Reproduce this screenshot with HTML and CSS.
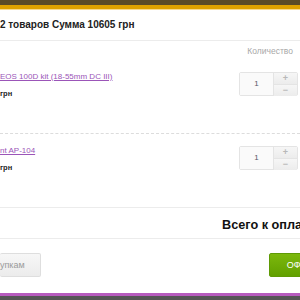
FILE: index.html
```html
<!DOCTYPE html>
<html lang="ru">
<head>
    <meta charset="UTF-8">
    <meta name="viewport" content="width=device-width, initial-scale=1.0">
    <title>Корзина</title>
    <link rel="stylesheet" href="styles.css">
</head>
<body>
    <div class="cart">
        <div class="cart-top"></div>

        <div class="cart-header">2 товаров Сумма 10605 грн</div>

        <div class="col-head">Количество</div>

        <div class="item item-dashed">
            <div class="item-info">
                <a class="item-link" href="#">EOS 100D kit (18-55mm DC III)</a>
                <div class="item-price">грн</div>
            </div>
            <div class="qty">
                <div class="qty-value">1</div>
                <div class="qty-buttons">
                    <div class="qty-btn">+</div>
                    <div class="qty-btn">&minus;</div>
                </div>
            </div>
        </div>

        <div class="item">
            <div class="item-info">
                <a class="item-link" href="#">nt AP-104</a>
                <div class="item-price">грн</div>
            </div>
            <div class="qty">
                <div class="qty-value">1</div>
                <div class="qty-buttons">
                    <div class="qty-btn">+</div>
                    <div class="qty-btn">&minus;</div>
                </div>
            </div>
        </div>

        <div class="cart-total">Всего к оплате: 10605 грн</div>

        <div class="cart-actions">
            <div class="btn btn-back">упкам</div>
            <div class="btn btn-order">ОФОРМИТЬ ЗАКАЗ</div>
        </div>

        <div class="cart-bottom"></div>
    </div>
</body>
</html>
```

FILE: styles.css
```css
:root {
    --line: #ececec;
    --text: #222222;
    --muted: #a8a8a8;
    --link: #9b55b8;
}

body {
    margin: 0;
    width: 300px;
    height: 300px;
    overflow: hidden;
    background: #ffffff;
    font-family: "Liberation Sans", Arial, sans-serif;
    color: var(--text);
}

.cart {
    display: flex;
    flex-direction: column;
    height: 300px;
}

.cart-top {
    height: 5px;
    background: #5b4a27;
    border-bottom: 4px solid #dfa100;
    box-shadow: 0 1px 0 #f8d98f;
    margin-bottom: 1px;
}

.cart-header {
    height: 31px;
    box-sizing: border-box;
    padding-top: 9px;
    font-size: 10px;
    line-height: 12px;
    font-weight: bold;
    white-space: nowrap;
    border-bottom: 1px solid var(--line);
}

.col-head {
    height: 19px;
    box-sizing: border-box;
    padding: 4px 7px 0 0;
    text-align: right;
    font-size: 8.5px;
    line-height: 12px;
    color: var(--muted);
}

.item {
    display: flex;
    justify-content: space-between;
    align-items: flex-start;
    height: 74px;
    box-sizing: border-box;
    padding-top: 12px;
    border-bottom: 1px solid var(--line);
}

.item-dashed {
    border-bottom: 1px dashed #dcdcdc;
}

.item-info {
    display: flex;
    flex-direction: column;
    gap: 7px;
}

.item-link {
    font-size: 8px;
    line-height: 10px;
    color: var(--link);
    white-space: nowrap;
}

.item-price {
    font-size: 7.5px;
    line-height: 10px;
    font-weight: bold;
}

.qty {
    display: flex;
    margin-right: 2px;
    border: 1px solid #e4e4e4;
    border-radius: 2px;
    height: 24px;
    box-sizing: border-box;
}

.qty-value {
    width: 33px;
    background: #fafafa;
    border-right: 1px solid #e4e4e4;
    text-align: center;
    font-size: 8px;
    line-height: 22px;
    color: #556;
}

.qty-buttons {
    display: flex;
    flex-direction: column;
    width: 23px;
}

.qty-btn {
    flex: 1;
    background: linear-gradient(#f6f6f6, #ececec);
    color: #b8b8b8;
    text-align: center;
    font-size: 9px;
    line-height: 11px;
    font-weight: bold;
}

.qty-btn + .qty-btn {
    border-top: 1px solid #e4e4e4;
}

.cart-total {
    height: 31px;
    box-sizing: border-box;
    padding: 10px 0 0 222px;
    font-size: 12.7px;
    line-height: 14px;
    font-weight: bold;
    color: #111111;
    white-space: nowrap;
    border-bottom: 1px solid var(--line);
}

.cart-actions {
    display: flex;
    align-items: flex-start;
    flex: 1;
    padding-top: 14px;
}

.btn {
    flex-shrink: 0;
    height: 24px;
    box-sizing: border-box;
    font-size: 9px;
    line-height: 22px;
    white-space: nowrap;
    border-radius: 2px;
}

.btn-back {
    padding-right: 15px;
    background: linear-gradient(#f7f7f7, #ececec);
    border: 1px solid #dedede;
    border-left: none;
    color: #9a9a9a;
}

.btn-order {
    margin-left: 228px;
    padding: 0 17px;
    background: linear-gradient(#7cb80c, #62a000);
    border: 1px solid #5f9a05;
    color: #ffffff;
}

.cart-bottom {
    height: 3px;
    background: #b65bbd;
    border-bottom: 4px solid #555555;
}
```
